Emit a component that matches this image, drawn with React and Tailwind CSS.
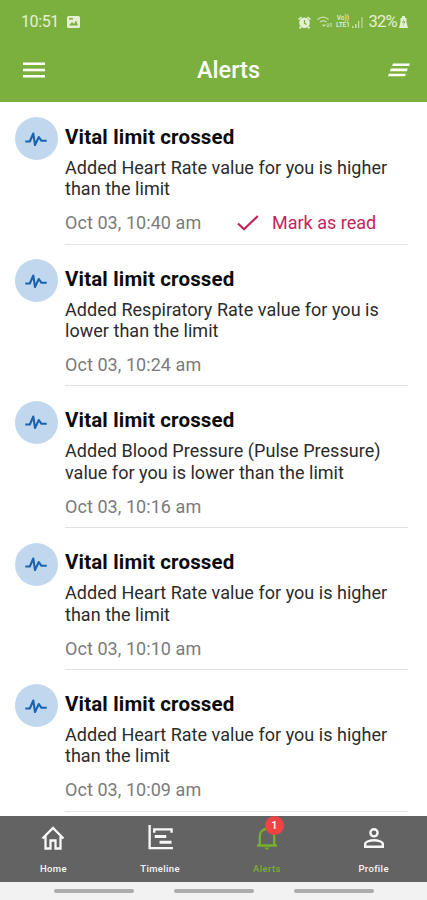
import React from 'react';

const alerts = [
  { id: 1, lines: ['Added Heart Rate value for you is higher', 'than the limit'], time: 'Oct 03, 10:40 am', unread: true },
  { id: 2, lines: ['Added Respiratory Rate value for you is', 'lower than the limit'], time: 'Oct 03, 10:24 am' },
  { id: 3, lines: ['Added Blood Pressure (Pulse Pressure)', 'value for you is lower than the limit'], time: 'Oct 03, 10:16 am' },
  { id: 4, lines: ['Added Heart Rate value for you is higher', 'than the limit'], time: 'Oct 03, 10:10 am' },
  { id: 5, lines: ['Added Heart Rate value for you is higher', 'than the limit'], time: 'Oct 03, 10:09 am' },
];

const StatusBar = () => (
  <div className="flex h-[44px] items-center pl-[21px] pr-[19px] text-[#e3f0d3]">
    <span className="w-[46px] text-[16px] leading-none tracking-[-0.4px]">10:51</span>
    <svg className="h-[12px] w-[13px]" viewBox="0 0 13 12">
      <rect width="13" height="12" rx="1.5" fill="currentColor" />
      <path d="M2 9.5 5 6l2 2 2-3.500 2 5zM2 2h4v1.500H2z" fill="#7cb03e" />
    </svg>
    <div className="ml-auto flex items-center">
      <svg className="mr-[6px] h-[13px] w-[13px]" viewBox="0 0 13 13" fill="currentColor">
        <circle cx="6.500" cy="6.800" r="5.300" />
        <path d="M0 3 3 .5l1 1L1 4zM13 3 10 .5l-1 1L12 4zM2 10l1.500 1.500L2.500 13 1 12zM11 10l-1.500 1.500L10.500 13 12 12z" />
        <path d="M6.500 4v3.200L8.500 8.500" fill="none" stroke="#7cb03e" strokeWidth="1.300" />
      </svg>
      <svg className="mr-[3px] h-[12px] w-[15px]" viewBox="0 0 15 12" fill="none" stroke="currentColor" opacity="0.75">
        <path d="M.5 3.500C4 .5 8 .5 11.500 3.500M3 6c2-1.500 4.500-1.500 6.500 0M5.500 8.500 7 10l1.500-1.500" strokeWidth="1.200" />
        <path d="M11 7v4M9.800 9.500 11 11l1.200-1.500M14 11V7M12.800 8.500 14 7" />
      </svg>
      <span className="mr-[2px] flex w-[15px] flex-col items-center text-[6.500px] font-medium leading-[7.500px]">
        <span>Vo))</span>
        <span>LTE1</span>
      </span>
      <svg className="mr-[5px] h-[11px] w-[11px]" viewBox="0 0 11 11" fill="currentColor" opacity="0.75">
        <path d="M0 9h1.500v2H0zM3 7h1.500v4H3zM6 4h1.200v7H6zM9.500 0h1v11h-1z" />
      </svg>
      <span className="text-[16.500px] leading-none tracking-[-0.700px]">32%</span>
      <svg className="ml-[2px] h-[12px] w-[9px]" viewBox="0 0 9 12" fill="currentColor">
        <path d="M3 0h3v2h1.500v4L9 12H0l1.500-6V2H3z" />
        <path d="M5 3 3 6.500h2L4 10l2.500-4.500h-2z" fill="#7cb03e" />
      </svg>
    </div>
  </div>
);

const Header = () => (
  <header className="h-[102px] bg-[#7cb03e]">
    <StatusBar />
    <div className="flex h-[52px] items-center justify-between pl-[23px] pr-[17px] text-white">
      <svg className="h-[16px] w-[22px]" viewBox="0 0 22 16" fill="currentColor">
        <path d="M0 .5h22V3H0zM0 6.700h22v2.500H0zM0 13h22v2.500H0z" />
      </svg>
      <h1 className="ml-[24px] pt-[2px] text-[23.500px] font-medium leading-none">Alerts</h1>
      <svg className="h-[14px] w-[22px]" viewBox="0 0 22 14" fill="currentColor">
        <path d="M5 .5h17l-.8 2.600h-17zM2.700 5.600h17l-.8 2.600h-17zM.8 10.700h17l-.8 2.600H0z" />
      </svg>
    </div>
  </header>
);

const AlertItem = ({ alert }) => (
  <li className="flex h-[141.8px] shrink-0 pl-[14.500px] pr-[19px]">
    <div className="mt-[14.500px] flex h-[43px] w-[43px] shrink-0 items-center justify-center rounded-full bg-[#c0d7ee]">
      <svg className="h-[16px] w-[22px]" viewBox="0 0 22 16" fill="none" stroke="#1b62b0" strokeWidth="2.100" strokeLinejoin="round">
        <path d="M.3 10.500h4.500L8.300 2.500 10 14l3.800-8 2.700 3.800h5.200" />
      </svg>
    </div>
    <div className="ml-[7.500px] flex-1 whitespace-nowrap border-b border-[#e2e2e5]">
      <h2 className="mt-[22px] text-[20.500px] font-bold leading-[24px] tracking-[0.160px] text-[#0c0c0c]">Vital limit crossed</h2>
      <p className="mt-[8px] text-[18px] leading-[21.500px] tracking-[0.030px] text-[#2b2b2b]">
        {alert.lines[0]}
        <br />
        {alert.lines[1]}
      </p>
      <div className="mt-[11px] flex h-[24px] items-center">
        <span className="w-[172px] text-[18px] tracking-[0.060px] text-[#7b7b7b]">{alert.time}</span>
        {alert.unread && (
          <button className="flex items-center text-[18px] text-[#c2255c]">
            <svg className="mr-[13px] h-[16px] w-[22px]" viewBox="0 0 22 16" fill="none" stroke="currentColor" strokeWidth="2.200">
              <path d="M1 8.500 7 14.300 20.800 1" />
            </svg>
            Mark as read
          </button>
        )}
      </div>
    </div>
  </li>
);

const HomeIcon = () => (
  <svg className="h-[24px] w-[24px]" viewBox="0 0 24 24" fill="none" stroke="currentColor" strokeWidth="2.300">
    <path d="M1.500 12.500 12 2l10.500 10.500M4.500 10v12.500h5v-8h5v8h5V10" />
  </svg>
);

const TimelineIcon = () => (
  <svg className="ml-[1px] h-[25px] w-[25px]" viewBox="0 0 26 26" fill="none" stroke="currentColor" strokeWidth="2.500">
    <path d="M1.700 0v24H26M6.500 8V4.500h18V8" />
    <path d="M7 12h12M12 18h12.500" strokeWidth="3.200" />
  </svg>
);

const BellIcon = () => (
  <svg className="h-[24px] w-[22px]" viewBox="0 0 22 24" fill="none" stroke="currentColor" strokeWidth="2.300">
    <path d="M1 19.500h20M3.800 19.500v-9c0-4.500 3-7.500 7.200-7.500s7.200 3 7.200 7.500v9" />
    <path d="M8.500 21.500h5L11 24zM9.700 0h2.600v3H9.700z" fill="currentColor" stroke="none" />
  </svg>
);

const ProfileIcon = () => (
  <svg className="h-[20px] w-[20px]" viewBox="0 0 20 20" fill="none" stroke="currentColor" strokeWidth="2.400">
    <circle cx="10" cy="4.800" r="3.600" />
    <path d="M1.200 18.800v-3c0-2 5-3.600 8.800-3.600s8.800 1.600 8.800 3.600v3z" />
  </svg>
);

const NavItem = ({ icon, label, active, badge }) => (
  <a className={`flex flex-1 flex-col items-center ${active ? 'text-[#76b02f]' : 'text-[#f7f7f7]'}`}>
    <div className="relative mt-[8px] flex h-[27px] items-center">
      {icon}
      {badge && (
        <span className="absolute -top-[8px] left-[9px] flex h-[19px] w-[19px] items-center justify-center rounded-full bg-[#ee4444] text-[11px] font-medium leading-none text-white">
          {badge}
        </span>
      )}
    </div>
    <span className="mt-[12px] text-[9.500px] font-medium leading-[12px] tracking-[0.350px]">{label}</span>
  </a>
);

const App = () => (
  <div className="flex h-[900px] w-[427px] flex-col overflow-hidden bg-white font-['Roboto',sans-serif]">
    <Header />
    <ul className="flex h-[714px] flex-col overflow-hidden pt-[0.800px]">
      {alerts.map((alert) => (
        <AlertItem key={alert.id} alert={alert} />
      ))}
    </ul>
    <nav className="flex h-[66px] bg-[#636363]">
      <NavItem icon={<HomeIcon />} label="Home" />
      <NavItem icon={<TimelineIcon />} label="Timeline" />
      <NavItem icon={<BellIcon />} label="Alerts" active badge="1" />
      <NavItem icon={<ProfileIcon />} label="Profile" />
    </nav>
    <div className="flex h-[18px] items-center justify-center gap-[40px] bg-[#f2f2f2]">
      <span className="h-[4px] w-[80px] rounded-sm bg-[#acacac]" />
      <span className="h-[4px] w-[80px] rounded-sm bg-[#acacac]" />
      <span className="h-[4px] w-[80px] rounded-sm bg-[#acacac]" />
    </div>
  </div>
);

export default App;
